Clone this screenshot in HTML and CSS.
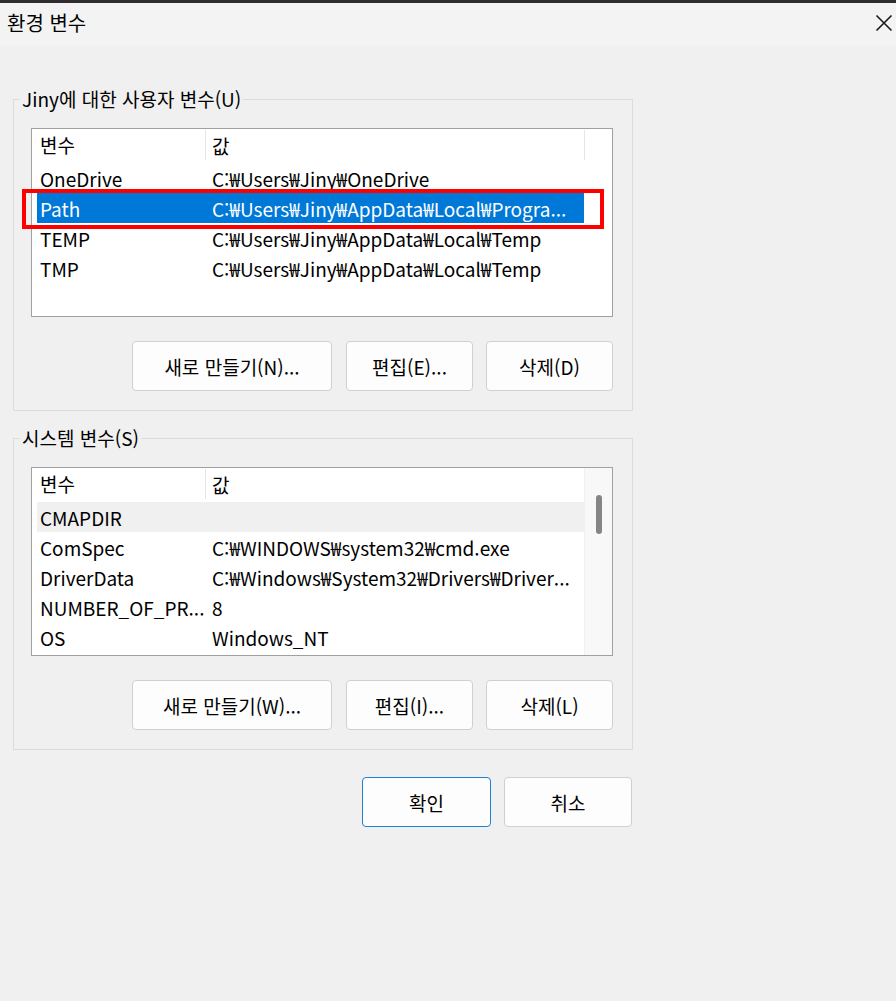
FILE: index.html
```html
<!DOCTYPE html>
<html lang="ko">
<head>
<meta charset="utf-8">
<title>환경 변수</title>
<link rel="stylesheet" href="styles.css">
</head>
<body>
<div class="window">
  <div class="titlebar">
    <span class="title">환경 변수</span>
    <svg class="close" width="18" height="18" viewBox="0 0 18 18"><path d="M1.5 1.5 L16.5 16.5 M16.5 1.5 L1.5 16.5" stroke="#1a1a1a" stroke-width="1.6" fill="none"/></svg>
  </div>
  <div class="content">
    <fieldset class="group group-user">
      <legend>Jiny에 대한 사용자 변수(U)</legend>
      <div class="group-body">
        <div class="list">
          <div class="list-main">
            <div class="row head"><span class="c1">변수</span><span class="c2">값</span></div>
            <div class="row"><span class="c1">OneDrive</span><span class="c2">C:₩Users₩Jiny₩OneDrive</span></div>
            <div class="row selected"><span class="c1">Path</span><span class="c2">C:₩Users₩Jiny₩AppData₩Local₩Progra...</span><span class="highlight-box"></span></div>
            <div class="row"><span class="c1">TEMP</span><span class="c2">C:₩Users₩Jiny₩AppData₩Local₩Temp</span></div>
            <div class="row"><span class="c1">TMP</span><span class="c2">C:₩Users₩Jiny₩AppData₩Local₩Temp</span></div>
          </div>
          <div class="list-tail"><div class="tail-head"></div></div>
        </div>
        <div class="buttons">
          <button class="btn btn-new">새로 만들기(N)...</button>
          <button class="btn btn-edit">편집(E)...</button>
          <button class="btn btn-del">삭제(D)</button>
        </div>
      </div>
    </fieldset>

    <fieldset class="group group-system">
      <legend>시스템 변수(S)</legend>
      <div class="group-body">
        <div class="list">
          <div class="list-main">
            <div class="row head"><span class="c1">변수</span><span class="c2">값</span></div>
            <div class="row hover"><span class="c1">CMAPDIR</span><span class="c2"></span></div>
            <div class="row"><span class="c1">ComSpec</span><span class="c2">C:₩WINDOWS₩system32₩cmd.exe</span></div>
            <div class="row"><span class="c1">DriverData</span><span class="c2">C:₩Windows₩System32₩Drivers₩Driver...</span></div>
            <div class="row"><span class="c1">NUMBER_OF_PR...</span><span class="c2">8</span></div>
            <div class="row"><span class="c1">OS</span><span class="c2">Windows_NT</span></div>
          </div>
          <div class="scrollbar"><div class="thumb"></div></div>
        </div>
        <div class="buttons">
          <button class="btn btn-new">새로 만들기(W)...</button>
          <button class="btn btn-edit">편집(I)...</button>
          <button class="btn btn-del">삭제(L)</button>
        </div>
      </div>
    </fieldset>

    <div class="dialog-buttons">
      <button class="btn btn-ok">확인</button>
      <button class="btn btn-cancel">취소</button>
    </div>
  </div>
</div>
</body>
</html>
```

FILE: styles.css
```css
* { box-sizing: border-box; }
html, body {
  margin: 0;
  padding: 0;
  background: #f0f0f0;
}
body {
  font-family: "Noto Sans CJK KR", "Noto Sans", sans-serif;
  font-size: 19px;
  color: #000;
  width: 896px;
  height: 1001px;
  overflow: hidden;
}
.window {
  border-top: 3px solid #2e2e2e;
}
.titlebar {
  height: 43px;
  background: #f3f3f3;
  display: flex;
  align-items: center;
  justify-content: space-between;
  padding: 0 3px 4px 7px;
}
.title {
  font-size: 20px;
}
.content {
  padding-left: 13px;
  padding-top: 43px;
}
.group {
  width: 620px;
  margin: 0;
  border: 1px solid #dcdcdc;
  padding: 0;
}
.group legend {
  padding: 0 2px;
  margin-left: 6px;
  line-height: 20px;
}
.group-body {
  padding: 0 19px 0 17px;
}
.group-user {
  height: 322px;
}
.group-system {
  margin-top: 17px;
  height: 322px;
}
.list {
  margin-top: 19px;
  height: 189px;
  border: 1px solid #a0a0a0;
  background: #fff;
  display: flex;
}
.list-main {
  width: 552px;
}
.list-tail {
  flex: 1;
}
.tail-head {
  border-left: 1px solid #e5e5e5;
  margin-top: 1px;
  height: 30px;
}
.row {
  position: relative;
  display: flex;
  height: 30px;
  align-items: center;
  margin-left: 5px;
}
.row .c1 {
  width: 175px;
  padding-left: 3px;
  white-space: nowrap;
}
.row .c2 {
  flex: 1;
  white-space: nowrap;
}
.row.head {
  height: 32px;
  margin-left: 0;
  margin-bottom: 2px;
}
.row.head .c1 {
  width: 174px;
  padding-left: 8px;
  height: 30px;
  line-height: 30px;
  border-right: 1px solid #e5e5e5;
}
.row.head .c2 {
  padding-left: 6px;
}
.row.selected {
  background: #0078d7;
  color: #fff;
}
.row.hover {
  background: #f0f0f0;
}
.scrollbar {
  flex: 1;
  background: #f8f8f8;
  border-left: 1px solid #f0f0f0;
  position: relative;
}
.thumb {
  position: absolute;
  left: 11px;
  top: 27px;
  width: 6px;
  height: 39px;
  border-radius: 3px;
  background: #858585;
}
.buttons {
  display: flex;
  justify-content: flex-end;
  margin-top: 24px;
}
.btn {
  font-family: inherit;
  font-size: 19px;
  color: #000;
  background: #fdfdfd;
  border: 1px solid #d0d0d0;
  border-radius: 4px;
  height: 50px;
  padding: 0;
}
.btn-new { width: 200px; margin-right: 14px; }
.btn-edit { width: 127px; margin-right: 13px; }
.btn-del { width: 127px; }
.dialog-buttons {
  width: 619px;
  display: flex;
  justify-content: flex-end;
  gap: 13px;
  margin-top: 27px;
}
.btn-ok {
  width: 129px;
  border-color: #1f7fd4;
}
.btn-cancel {
  width: 128px;
}
.highlight-box {
  position: absolute;
  left: -15px;
  top: -4px;
  width: 582px;
  height: 40px;
  border: 4px solid #ff0000;
  pointer-events: none;
}
```
